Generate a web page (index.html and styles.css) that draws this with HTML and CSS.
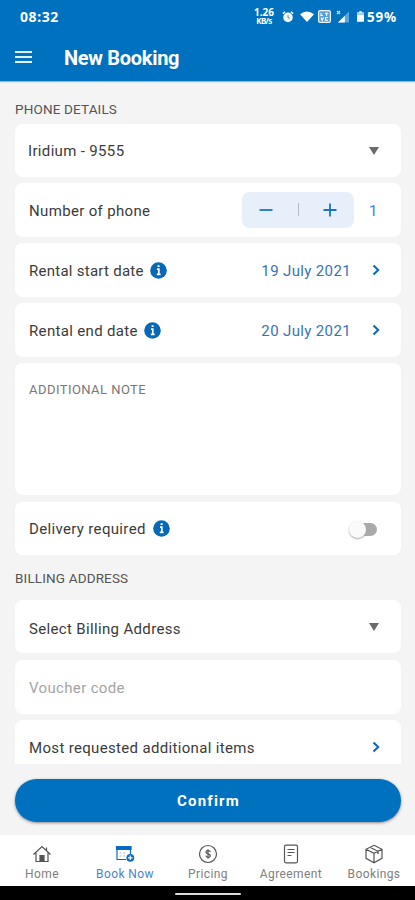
FILE: index.html
```html
<!DOCTYPE html>
<html lang="en">
<head>
<meta charset="utf-8">
<meta name="viewport" content="width=device-width, initial-scale=1">
<title>New Booking</title>
<link rel="stylesheet" href="styles.css">
</head>
<body>
<div class="app">
  <header class="header">
    <div class="status">
      <span class="clock">08:32</span>
      <div class="indicators">
        <span class="speed"><b>1.26</b><small>KB/s</small></span>
        <svg class="alarm" width="12" height="12" viewBox="0 0 12 12"><circle cx="6" cy="6.4" r="4.8" fill="#f2f8ff"/><path d="M.8 2.6 3 .8M11.2 2.6 9 .8" stroke="#f2f8ff" stroke-width="1.5"/><path d="M6 4.2v2.4l1.600.8" fill="none" stroke="#0071bf" stroke-width=".8"/></svg>
        <svg class="wifi" width="14" height="11" viewBox="0 0 14 11"><path d="M0 3.2Q7-2 14 3.2L7 11z" fill="#fff"/></svg>
        <svg class="volte" width="13" height="13" viewBox="0 0 13 13"><rect x=".6" y=".6" width="11.8" height="11.8" rx="1.5" fill="#5b9fda" stroke="#eef6ff" stroke-width="1.2"/><path d="M3 3v2.5h2M7 3.2h3.3M8.6 3.2V6M3 7.5l1.2 2.8 1.3-2.8M10 7.5H7.6v2.7H10" fill="none" stroke="#fff" stroke-width="1.1"/></svg>
        <svg class="signal" width="14" height="13" viewBox="0 0 14 13"><path d="M2 12.5 13 1.5v11z" fill="#5aa6df"/><path d="M2 12.5 8.8 5.7v6.8z" fill="#fff"/><path d="m1 1 3 3m0-3L1 4" stroke="#c5def5" stroke-width="1.2"/></svg>
        <svg class="battery" width="7" height="11" viewBox="0 0 8 12"><path d="M2.5 0h3v1.5H8V12H0V1.5h2.5z" fill="#fff"/><path d="M0 1.5h8v3H0z" fill="#a9d0ef"/></svg>
        <span class="percent">59%</span>
      </div>
    </div>
    <div class="titlebar">
      <button class="menu" aria-label="Menu"><i></i><i></i><i></i></button>
      <h1>New Booking</h1>
    </div>
  </header>

  <main class="form">
    <h2 class="section phone-section">PHONE DETAILS</h2>
    <div class="card select"><span class="label iridium">Iridium - 9555</span><i class="caret"></i></div>
    <div class="card"><span class="label">Number of phone</span>
      <div class="stepper">
        <svg width="14" height="14" viewBox="0 0 14 14"><path d="M.5 7h13"/></svg>
        <i class="divider"></i>
        <svg width="14" height="14" viewBox="0 0 14 14"><path d="M.5 7h13M7 .5v13"/></svg>
      </div>
      <span class="count">1</span>
    </div>
    <div class="card"><span class="label start">Rental start date</span>
      <svg class="info" width="17" height="17" viewBox="0 0 17 17"><circle cx="8.5" cy="8.5" r="8.3" fill="#0868b8"/><path d="M7 7.2h1.8v5M6.800 12.300h3.800M7.600 4.200h2" fill="none" stroke="#fff" stroke-width="1.7"/></svg>
      <span class="date">19 July 2021</span>
      <svg class="chev" width="8" height="12" viewBox="0 0 8 12"><path d="m1.5 1.5 4.7 4.5-4.7 4.5"/></svg>
    </div>
    <div class="card"><span class="label end">Rental end date</span>
      <svg class="info" width="17" height="17" viewBox="0 0 17 17"><circle cx="8.5" cy="8.5" r="8.3" fill="#0868b8"/><path d="M7 7.2h1.8v5M6.800 12.300h3.800M7.600 4.200h2" fill="none" stroke="#fff" stroke-width="1.7"/></svg>
      <span class="date">20 July 2021</span>
      <svg class="chev" width="8" height="12" viewBox="0 0 8 12"><path d="m1.5 1.5 4.7 4.5-4.7 4.5"/></svg>
    </div>
    <div class="card note">ADDITIONAL NOTE</div>
    <div class="card delivery"><span class="label required">Delivery required</span>
      <svg class="info" width="17" height="17" viewBox="0 0 17 17"><circle cx="8.5" cy="8.5" r="8.3" fill="#0868b8"/><path d="M7 7.2h1.8v5M6.800 12.300h3.800M7.600 4.200h2" fill="none" stroke="#fff" stroke-width="1.7"/></svg>
      <span class="toggle"><i></i></span>
    </div>
    <h2 class="section billing-section">BILLING ADDRESS</h2>
    <div class="card select address"><span class="label billing">Select Billing Address</span><i class="caret"></i></div>
    <div class="card voucher-card"><span class="label voucher">Voucher code</span></div>
    <div class="card"><span class="label items">Most requested additional items</span>
      <svg class="chev" width="8" height="12" viewBox="0 0 8 12"><path d="m1.5 1.5 4.7 4.5-4.7 4.5"/></svg>
    </div>
  </main>

  <div class="action"><button class="confirm">Confirm</button></div>

  <nav class="tabs">
    <a class="tab"><svg width="20" height="20" viewBox="0 0 20 20"><path d="M1.5 10.5 10 2.5l8.500 8M4 8.800V17.500h12V8.800M14.500 3.500v3"/><path d="M8 17.500v-6h4v6z" fill="#555"/></svg><span>Home</span></a>
    <a class="tab active"><svg width="20" height="20" viewBox="0 0 20 20"><path d="M11 15.500H2V3h13.500v7.500"/><path d="M1.500 2.500H16v3H1.500z" fill="#0969c2"/><path d="M4.500 9h2M8 9h2M4.500 12h2M8 12h2" opacity=".4"/><circle cx="15.300" cy="13.800" r="3.900" fill="#0969c2" stroke="none"/><path d="M13 13.800h4.600M15.300 11.500v4.600" stroke="#fff"/></svg><span>Book Now</span></a>
    <a class="tab"><svg width="20" height="20" viewBox="0 0 20 20"><circle cx="10" cy="10" r="8.500"/><path d="M12.300 8C12 6.200 7.900 6.200 7.900 8.200s4.400 1.400 4.400 3.600-4.100 2.100-4.600-.1M10 5.300v9.400"/></svg><span>Pricing</span></a>
    <a class="tab"><svg width="20" height="20" viewBox="0 0 20 20"><rect x="3.500" y="1.200" width="13" height="17.600" rx="1.500"/><path d="M6.500 5.500h7M6.500 8.500h7M6.500 11.500h4"/></svg><span>Agreement</span></a>
    <a class="tab"><svg width="20" height="20" viewBox="0 0 20 20"><path d="m10 1.300 8 4v9l-8 4.400-8-4.400v-9zM2 5.300l8 4 8-4M10 9.300v9.400M6 3.300l8 4V10"/></svg><span>Bookings</span></a>
  </nav>
  <footer class="system"><i></i></footer>
</div>
</body>
</html>
```
FILE: styles.css
```css
* { box-sizing: border-box; }
body { margin: 0; font-family: Roboto, "Liberation Sans", sans-serif; background: #f4f4f4; }
button { border: 0; padding: 0; font: inherit; }
svg { display: block; flex: none; }
.app { width: 415px; height: 900px; display: flex; flex-direction: column; overflow: hidden; background: #f4f4f4; }

.header { height: 81px; flex: none; background: #0071bf; color: #fff; box-shadow: 0 1px 1px #8bbde0; }
.status { height: 33px; padding: 0 19px 0 20px; display: flex; align-items: center; justify-content: space-between; }
.clock { font: 700 14px "Noto Sans", sans-serif; letter-spacing: .6px; }
.indicators { display: flex; align-items: center; }
.speed { width: 20px; display: flex; flex-direction: column; align-items: center; }
.speed b { font: 700 10px/9px "Noto Sans", sans-serif; }
.speed small { font: 700 8px/8px "Noto Sans", sans-serif; letter-spacing: -.6px; }
.alarm { margin-left: 8px; }
.wifi { margin-left: 6px; }
.volte { margin-left: 4px; }
.signal { margin-left: 5px; }
.battery { margin-left: 7px; }
.percent { margin-left: 3px; font: 700 13.500px "Noto Sans", sans-serif; letter-spacing: .8px; margin-right: -1px; }
.titlebar { height: 48px; padding-left: 15px; display: flex; align-items: center; }
.menu { width: 17px; display: flex; flex-direction: column; gap: 3px; background: none; }
.menu i { height: 2px; background: #e3f1fb; }
h1 { margin: 0 0 0 32px; padding-top: 1px; font-size: 20px; font-weight: 700; line-height: 24px; letter-spacing: -.3px; }

.form { height: 683px; flex: none; padding: 0 14px 0 15px; display: flex; flex-direction: column; gap: 6px; overflow: hidden; }
.section { margin: 0; flex: none; font-size: 13.500px; font-weight: 400; line-height: 16px; letter-spacing: .15px; color: #555; }
.phone-section { padding-top: 20px; height: 37px; }
.card { height: 54px; flex: none; padding: 1px 21px 0 14px; display: flex; align-items: center; border-radius: 8px; background: #fff; }
.label { font-size: 15px; line-height: 20px; letter-spacing: .34px; color: #3b3b3b; white-space: nowrap; }
.select { height: 53px; padding-right: 22px; }
.iridium { margin-left: -1px; }
.start { letter-spacing: .26px; }
.items { letter-spacing: .33px; }
.caret { margin-left: auto; border: 5px solid transparent; border-top: 8px solid #6b6b6b; border-bottom: 0; }
.stepper { width: 112px; height: 36px; margin: 0 0 2px auto; padding: 0 17px; display: flex; align-items: center; justify-content: space-between; border-radius: 8px; background: #e7effa; }
.stepper svg { fill: none; stroke: #1974c2; stroke-width: 1.800px; }
.divider { width: 1px; height: 13px; background: #b2bdca; }
.count { width: 10px; margin: 0 1px 0 15px; font-size: 15px; color: #3d7fcd; }
.info { margin-left: 6px; margin-bottom: 1px; }
.required + .info { margin-left: 7px; }
.date { margin-left: auto; font-size: 15px; letter-spacing: .36px; color: #3673ba; white-space: nowrap; }
.chev { margin-left: 21px; margin-bottom: 1px; fill: none; stroke: #0868b8; stroke-width: 2px; }
.items + .chev { margin-left: auto; }
.note { height: 132px; padding-top: 19px; align-items: flex-start; font-size: 13px; line-height: 16px; letter-spacing: .45px; color: #777; }
.delivery { height: 53px; margin-top: 1px; }
.toggle { width: 28px; margin-left: auto; margin-right: 3px; display: flex; align-items: center; }
.toggle::after { content: ""; width: 16px; height: 13px; margin-left: -5px; border-radius: 0 7px 7px 0; background: #aaa; }
.toggle i { width: 17px; height: 17px; z-index: 1; border-radius: 50%; background: #fafafa; box-shadow: 0 1px 2px #aaa; }
.billing-section { height: 33px; padding-top: 9px; }
.address { padding-top: 4px; }
.address .caret { margin-bottom: 3px; }
.voucher { color: #a4a4a4; }
.voucher-card { margin-top: 1px; }

.action { height: 71px; flex: none; padding: 15px 14px 0 15px; }
.confirm { width: 100%; height: 43px; border-radius: 22px; background: #0071bf; color: #fff; font-size: 15px; font-weight: 700; letter-spacing: 1.200px; padding-left: 1px; box-shadow: 0 1px 3px #888; }
.tabs { height: 51px; flex: none; display: flex; background: #fff; }
.tab { width: 83px; padding: 9px 0 0 1px; display: flex; flex-direction: column; align-items: center; font-size: 12px; line-height: 14px; letter-spacing: .4px; color: #808080; white-space: nowrap; }
.tab svg { margin-bottom: 3px; fill: none; stroke: #555; stroke-width: 1.200px; }
.active { color: #4983d0; }
.active svg { stroke: #0969c2; }
.system { height: 14px; flex: none; display: flex; justify-content: center; padding-top: 7px; background: #000; }
.system i { width: 66px; height: 2px; border-radius: 1px; background: #ddd; }
```
